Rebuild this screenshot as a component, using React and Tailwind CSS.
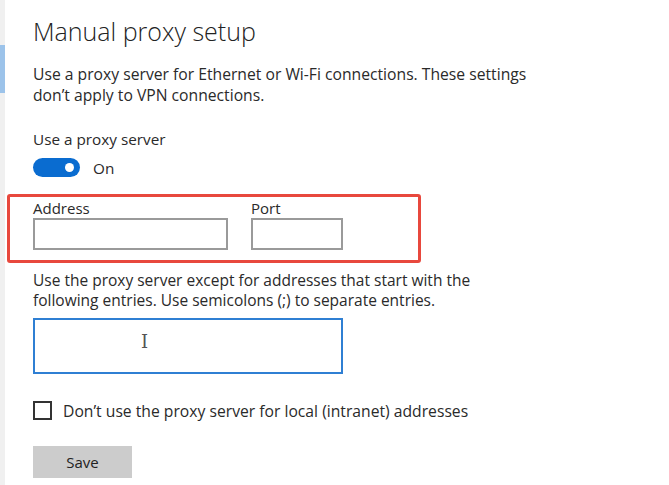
export default function App() {
  return (
    <div className="flex w-[669px] h-[485px] bg-white overflow-hidden font-['Open_Sans',sans-serif] text-[#2a2a2a]">
      <div className="w-[5px] shrink-0 bg-[#f0f0f0] flex flex-col">
        <div className="h-[45px]" />
        <div className="h-[48px] bg-[#9cc3ea]" />
      </div>
      <div className="pl-[28px] pt-[16px] flex flex-col">
        <h1 className="text-[25px] leading-[30px] font-light text-[#222] whitespace-nowrap">Manual proxy setup</h1>
        <p className="mt-[18px] text-[15.7px] leading-[21px] whitespace-nowrap">
          Use a proxy server for Ethernet or Wi-Fi connections. These settings
          <br />
          don’t apply to VPN connections.
        </p>
        <div className="mt-[23px] text-[15.3px] leading-[20px]">Use a proxy server</div>
        <div className="mt-[9px] flex items-center h-[19px]">
          <div className="w-[47px] h-[19px] rounded-full bg-[#0a6cd0] flex items-center justify-end pr-[6px]">
            <div className="w-[9px] h-[9px] rounded-full bg-white" />
          </div>
          <span className="ml-[13px] text-[15.3px] leading-[20px]">On</span>
        </div>
        <div className="mt-[17px] -ml-[26px] w-[414px] h-[69px] border-[3px] border-[#e8483d] rounded-[3px] pl-[23px] pt-[3px] flex gap-[23px]">
          <div className="flex flex-col">
            <label className="text-[15px] leading-[16px] mb-[2px]">Address</label>
            <div className="w-[195px] h-[32px] border-2 border-[#9a9a9a] bg-white" />
          </div>
          <div className="flex flex-col">
            <label className="text-[15px] leading-[16px] mb-[2px]">Port</label>
            <div className="w-[92px] h-[32px] border-2 border-[#9a9a9a] bg-white" />
          </div>
        </div>
        <p className="mt-[7px] text-[15.5px] leading-[20px] whitespace-nowrap">
          Use the proxy server except for addresses that start with the
          <br />
          following entries. Use semicolons (;) to separate entries.
        </p>
        <div className="mt-[8px] w-[310px] h-[56px] border-2 border-[#2f7fd3] bg-white flex items-center pl-[106px] pb-[8px]">
          <span className="text-[#555] text-[18px] leading-none font-['DejaVu_Serif',serif] font-light">I</span>
        </div>
        <label className="mt-[27px] flex items-center h-[19px]">
          <div className="w-[19px] h-[19px] border-2 border-[#333] bg-white shrink-0" />
          <span className="ml-[11px] text-[15.7px] leading-[20px] whitespace-nowrap">Don’t use the proxy server for local (intranet) addresses</span>
        </label>
        <button className="mt-[26px] w-[99px] h-[32px] bg-[#cccccc] text-[15px] text-[#222]">Save</button>
      </div>
    </div>
  );
}
